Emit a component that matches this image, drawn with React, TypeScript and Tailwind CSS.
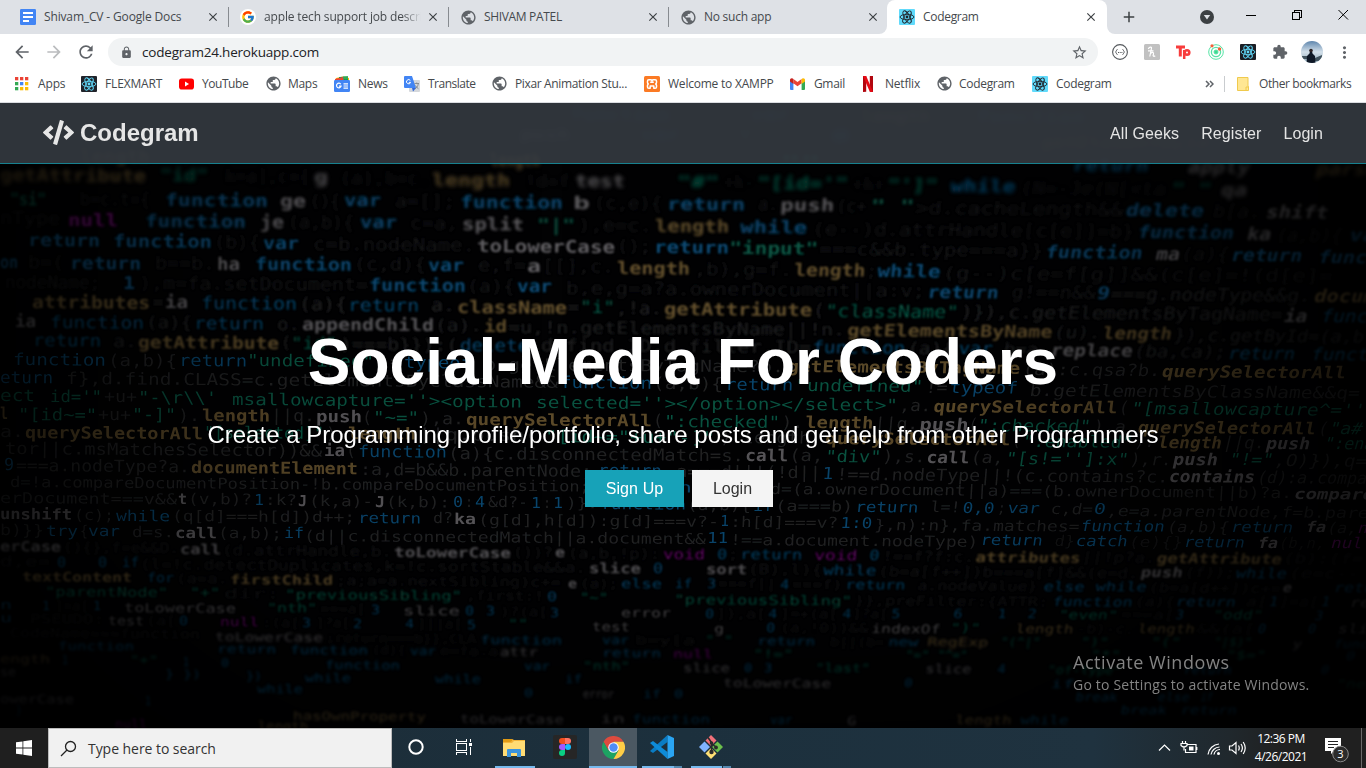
import type { ReactNode } from "react";
import {
  MdAdd,
  MdArrowBack,
  MdArrowForward,
  MdClose,
  MdExtension,
  MdLock,
  MdMoreVert,
  MdPublic,
  MdRefresh,
  MdStarOutline,
} from "react-icons/md";
import { FcGoogle } from "react-icons/fc";
import { FaCode } from "react-icons/fa";

/* ---------- favicons and small drawings ---------- */

function Atom({ bg, fg, size = 16 }: { bg: string; fg: string; size?: number }) {
  return (
    <svg width={size} height={size} viewBox="0 0 16 16" className="shrink-0">
      <rect width="16" height="16" rx="1" fill={bg} />
      <g fill="none" stroke={fg} strokeWidth="0.9">
        <ellipse cx="8" cy="8" rx="6.9" ry="2.7" />
        <ellipse cx="8" cy="8" rx="6.9" ry="2.7" transform="rotate(60 8 8)" />
        <ellipse cx="8" cy="8" rx="6.9" ry="2.7" transform="rotate(120 8 8)" />
      </g>
      <circle cx="8" cy="8" r="1.4" fill={fg} />
    </svg>
  );
}

const Globe = () => <MdPublic className="size-[17px] shrink-0 text-[#5f6368]" />;

const DocsIcon = () => (
  <svg width="16" height="16" viewBox="0 0 16 16" className="shrink-0">
    <rect width="16" height="16" rx="1.2" fill="#4285f4" />
    <path d="M3 4h10M3 8h10M3 12h6" stroke="#fff" strokeWidth="1.8" />
  </svg>
);

const GoogleIcon = () => (
  <span className="flex size-4 shrink-0 items-center justify-center rounded-full bg-white">
    <FcGoogle className="size-[14px]" />
  </span>
);

const AppsIcon = () => {
  const colors = ["#ea4335", "#ea4335", "#ea4335", "#34a853", "#4285f4", "#fbbc05", "#34a853", "#fbbc05", "#fbbc05"];
  return (
    <svg width="14" height="14" viewBox="0 0 14 14" className="shrink-0">
      {colors.map((c, i) => (
        <rect key={i} x={(i % 3) * 5} y={Math.floor(i / 3) * 5} width="3.3" height="3.3" fill={c} />
      ))}
    </svg>
  );
};

const YouTubeIcon = () => (
  <svg width="15" height="12" viewBox="0 0 15 12" className="shrink-0">
    <rect y="0.5" width="15" height="11" rx="2.8" fill="#f00" />
    <path d="M6 3.6v4.8L10 6z" fill="#fff" />
  </svg>
);

const NewsIcon = () => (
  <svg width="16" height="16" viewBox="0 0 16 16" className="shrink-0">
    <path d="M2 2l7-1.5L15 2v5H1z" fill="#fbbc04" />
    <path d="M5 1l9-.6V5H5z" fill="#0f9d58" />
    <path d="M1 3l8-2 1 4H1z" fill="#ea4335" />
    <path d="M9 .5l5-.2V3L9 3z" fill="#34a853" />
    <rect y="4" width="16" height="12" rx="1.2" fill="#4285f4" />
    <path d="M6.8 8.3A2.3 2.3 0 1 0 7 10.2H5M9.5 7.8H14M9.5 10H14M9.5 12.2H14" fill="none" stroke="#fff" strokeWidth="1.2" />
  </svg>
);

const TranslateIcon = () => (
  <svg width="16" height="16" viewBox="0 0 16 16" className="shrink-0">
    <rect x="5" y="4" width="11" height="12" rx="1" fill="#d5d8dc" />
    <path d="M0 1a1 1 0 0 1 1-1h7l4 12H1a1 1 0 0 1-1-1z" fill="#4285f4" />
    <path d="M8 12h4l-3 3.5z" fill="#3367d6" />
    <path d="M6.4 4.6A2.1 2.1 0 1 0 6.6 6.4H4.8" fill="none" stroke="#fff" strokeWidth="1" />
    <path d="M10.5 7.5H15M12.7 6.5v1M11 13c2-1.500 3-3 3.300-5.500M11.500 9.500c.8 1.500 1.700 2.500 3 3.300" fill="none" stroke="#7a8086" strokeWidth=".8" />
  </svg>
);

const XamppIcon = () => (
  <svg width="16" height="16" viewBox="0 0 16 16" className="shrink-0">
    <rect width="16" height="16" rx="1.500" fill="#fb7a24" />
    <path
      d="M4.800 3.800h1.700q1 0 1.500 1 .5-1 1.500-1h1.700q1.300 0 1.300 1.300v1.400q0 1-.8 1.500.8.500.8 1.500v1.400q0 1.300-1.300 1.300H9.800V10H6.200v2.200H4.800q-1.300 0-1.300-1.300V9.500q0-1 .8-1.500-.8-.5-.8-1.500V5.100q0-1.300 1.300-1.300zM6.200 6.300h3.600"
      fill="none"
      stroke="#fff"
      strokeWidth="1.500"
      strokeLinejoin="round"
    />
  </svg>
);

const GmailIcon = () => (
  <svg width="15" height="12" viewBox="0 0 15 12" className="shrink-0">
    <path d="M0 2v9a1 1 0 0 0 1 1h2.400V4.600z" fill="#4285f4" />
    <path d="M15 2v9a1 1 0 0 1-1 1h-2.400V4.600z" fill="#34a853" />
    <path d="M3.400 1v4.200l4.100 3.100 4.100-3.100V1L7.500 4.100z" fill="#ea4335" />
    <path d="M0 2v1.600l3.400 2.500V1.100L2.600.5C1.500-.3 0 .5 0 2z" fill="#c5221f" />
    <path d="M15 2v1.600l-3.400 2.500V1.100l.8-.6C13.500-.3 15 .5 15 2z" fill="#fbbc04" />
  </svg>
);

const NetflixIcon = () => (
  <svg width="10" height="16" viewBox="0 0 10 16" className="shrink-0">
    <path d="M0 0h3.200v15.700L0 16zM6.800 0H10v16l-3.200-.3z" fill="#b1060f" />
    <path d="M0 0h3.200L10 16l-3.200-.3z" fill="#e50914" />
  </svg>
);

const FolderIcon = () => (
  <svg width="12" height="14" viewBox="0 0 12 14" className="shrink-0">
    <path d="M.5.500h10.500v9h.5v4H.5z" fill="#ffe793" stroke="#f0ca4d" />
    <path d="M9 13.500V10h2.500" fill="none" stroke="#f0ca4d" />
  </svg>
);

/* ---------- browser chrome ---------- */

function Tab({ icon, title, tracking, fade }: { icon: ReactNode; title: string; tracking: string; fade?: boolean }) {
  return (
    <div className="flex h-full w-[220px] shrink-0 items-center">
      <div className="flex w-6 shrink-0 items-center">{icon}</div>
      <div className={`w-[157px] shrink-0 overflow-hidden whitespace-nowrap text-[12px] text-[#45494d] ${tracking} ${fade ? "[mask-image:linear-gradient(to_right,black_88%,transparent)]" : ""}`}>
        {title}
      </div>
      <MdClose className="ml-[5px] size-[14px] shrink-0 text-[#3c4043]" />
      <div className="ml-2 h-5 w-px shrink-0 bg-[#878b90]" />
    </div>
  );
}

function TabStrip() {
  return (
    <div className="flex h-[34px] shrink-0 bg-white">
      <div className="flex w-[887px] shrink-0 overflow-hidden rounded-br-lg bg-[#dee1e6] pl-5">
        <Tab icon={<DocsIcon />} title="Shivam_CV - Google Docs" tracking="tracking-[-0.15px]" />
        <Tab icon={<GoogleIcon />} title="apple tech support job descrip" tracking="tracking-[-0.15px]" fade />
        <Tab icon={<Globe />} title="SHIVAM PATEL" tracking="tracking-[-0.33px]" />
        <Tab icon={<Globe />} title="No such app" tracking="tracking-[-0.25px]" />
      </div>
      <div className="flex bg-[#dee1e6]">
        <div className="flex w-[220px] items-center rounded-t-lg bg-white pl-3">
          <Atom bg="#61dafb" fg="#20232a" />
          <div className="ml-2 w-[157px] text-[12px] tracking-[-0.3px] text-[#45494d]">Codegram</div>
          <MdClose className="ml-[4px] size-[14px] text-[#3c4043]" />
        </div>
      </div>
      <div className="flex flex-1 items-center rounded-bl-lg bg-[#dee1e6] text-[#3c4043]">
        <MdAdd className="ml-[13px] size-[18px]" />
        <svg width="14" height="14" viewBox="0 0 14 14" className="ml-[62px]">
          <circle cx="7" cy="7" r="7" fill="#3c4043" />
          <path d="M3.800 5h6.400L7 9.500z" fill="#dee1e6" />
        </svg>
        <svg width="104" height="12" viewBox="0 0 104 12" className="mb-[5px] ml-[32px]" fill="none" stroke="#000" shapeRendering="crispEdges">
          <path d="M0 6.500h10" />
          <path d="M46.500 3.500h7v7h-7zM48.500 3.500v-2h7v7h-2" />
          <path d="M92.500 1l9.500 9.500M102 1l-9.500 9.500" shapeRendering="auto" />
        </svg>
      </div>
    </div>
  );
}

function Toolbar() {
  return (
    <div className="flex h-9 shrink-0 items-center bg-white pl-3 text-[#5f6368]">
      <MdArrowBack className="size-5" />
      <MdArrowForward className="ml-3 size-5 text-[#babcbe]" />
      <MdRefresh className="ml-3 size-5" />
      <div className="ml-3 flex h-7 w-[990px] items-center rounded-full bg-[#f1f3f4] pl-3">
        <MdLock className="size-[13px]" />
        <span className="ml-[9px] flex-1 text-[13.500px] tracking-[-0.2px] text-[#202124]">codegram24.herokuapp.com</span>
        <MdStarOutline className="mr-[10px] size-[17px]" />
      </div>
      <div className="ml-[14px] flex items-center gap-4">
        <svg width="16" height="16" viewBox="0 0 16 16" fill="none" stroke="#55595d">
          <circle cx="8" cy="8" r="7.400" strokeWidth="1.100" />
          <path d="M5.500 5.500c-1.500 0-.6 2-2 2.500 1.400.5.5 2.500 2 2.500M10.500 5.500c1.500 0 .6 2 2 2.500-1.400.5-.5 2.500-2 2.500" strokeWidth="1" />
          <path d="M6 8.500h4.500" strokeWidth="1" strokeDasharray="1 .7" />
        </svg>
        <svg width="16" height="16" viewBox="0 0 16 16">
          <rect width="16" height="16" rx="1.500" fill="#c1c1c1" />
          <path d="M4.300 5c.8-2 3.400-2.600 3.200-.8L5.800 12.500M4 6.800h5.500M6.500 9.800c1.200-2 3.300-2 3 .2l-.4 1.700q.8 1.200 2.100 0" fill="none" stroke="#fff" strokeWidth="1.200" />
        </svg>
        <svg width="16" height="16" viewBox="0 0 16 16" fill="none" stroke="#f73c3c" strokeWidth="3">
          <path d="M0 3h9M4.300 3v9.500" />
          <circle cx="11" cy="8.500" r="2.300" strokeWidth="2.600" />
          <path d="M8.200 6v9" strokeWidth="2.500" />
        </svg>
        <svg width="16" height="16" viewBox="0 0 16 16" fill="none" stroke="#57e4a6">
          <circle cx="8" cy="8" r="7.300" />
          <circle cx="8" cy="8" r="4.600" strokeWidth="1.300" />
          <circle cx="8" cy="8" r="2" fill="#40d890" />
          <circle cx="4" cy="1.800" r="1.600" fill="#f4603a" stroke="none" />
          <circle cx="11.500" cy="5" r="1.700" fill="#f4603a" stroke="none" />
        </svg>
        <Atom bg="#1b1e24" fg="#61dafb" />
        <MdExtension className="size-4" />
      </div>
      <svg width="22" height="22" viewBox="0 0 22 22" className="ml-[13px]">
        <defs>
          <clipPath id="avatar"><circle cx="11" cy="11" r="11" /></clipPath>
          <linearGradient id="sky" x2="0" y2="1"><stop stopColor="#5f86ad" /><stop offset=".5" stopColor="#d3e0ea" /><stop offset="1" stopColor="#8fa7b7" /></linearGradient>
        </defs>
        <g clipPath="url(#avatar)">
          <rect width="22" height="22" fill="url(#sky)" />
          <path d="M0 15h6v3H2zM14 17l7-3v6h-7z" fill="#42545f" />
          <path d="M5.500 22l.5-7 2.500-2.500L9 10h2l.5 2.500L14 15l.5 7z" fill="#0e1826" />
          <circle cx="10" cy="9.500" r="1.800" fill="#2b2224" />
        </g>
      </svg>
      <MdMoreVert className="ml-[12px] size-[19px]" />
    </div>
  );
}

/* slot: distance from this icon to the next one */
const bookmarks: { icon: ReactNode; label: string; slot: string; gap: string }[] = [
  { icon: <AppsIcon />, label: "Apps", slot: "w-[66px]", gap: "w-[23px]" },
  { icon: <Atom bg="#20232a" fg="#61dafb" />, label: "FLEXMART", slot: "w-[98px]", gap: "w-6" },
  { icon: <YouTubeIcon />, label: "YouTube", slot: "w-[86px] tracking-[-0.45px]", gap: "w-[23px]" },
  { icon: <Globe />, label: "Maps", slot: "w-[69px] tracking-[-0.3px]", gap: "w-[23px]" },
  { icon: <NewsIcon />, label: "News", slot: "w-[70px] tracking-[-0.3px]", gap: "w-6" },
  { icon: <TranslateIcon />, label: "Translate", slot: "w-[87px] tracking-[-0.5px]", gap: "w-6" },
  { icon: <Globe />, label: "Pixar Animation Stu...", slot: "w-[153px] tracking-[-0.35px]", gap: "w-6" },
  { icon: <XamppIcon />, label: "Welcome to XAMPP", slot: "w-[146px] tracking-[-0.22px]", gap: "w-6" },
  { icon: <GmailIcon />, label: "Gmail", slot: "w-[73px] tracking-[-0.35px]", gap: "w-6" },
  { icon: <NetflixIcon />, label: "Netflix", slot: "w-[73px] tracking-[-0.2px]", gap: "w-[22px]" },
  { icon: <Globe />, label: "Codegram", slot: "w-[96px] tracking-[-0.3px]", gap: "w-[23px]" },
  { icon: <Atom bg="#61dafb" fg="#20232a" />, label: "Codegram", slot: "w-[100px] tracking-[-0.3px]", gap: "w-6" },
];

function Bookmarks() {
  return (
    <div className="flex h-[33px] shrink-0 items-center border-b border-[#dadce0] bg-white pb-[5px] pl-[15px] text-[12px] tracking-[-0.15px] text-[#45494d]">
      {bookmarks.map((b, i) => (
        <div key={i} className={`flex shrink-0 items-center whitespace-nowrap ${b.slot}`}>
          <span className={`flex shrink-0 items-center ${b.gap}`}>{b.icon}</span>
          {b.label}
        </div>
      ))}
      <svg width="9" height="8" viewBox="0 0 9 8" className="ml-[73px] shrink-0" fill="none" stroke="#5f6368" strokeWidth="1.500">
        <path d="M1 1l3 3-3 3M5 1l3 3-3 3" />
      </svg>
      <div className="ml-[10px] h-4 w-px shrink-0 bg-[#c9cccf]" />
      <div className="ml-[12px] flex w-[22px] shrink-0"><FolderIcon /></div>
      <span className="whitespace-nowrap tracking-[-0.42px]">Other bookmarks</span>
    </div>
  );
}

/* ---------- hero backdrop: out-of-focus source listing ---------- */

type Hue = "b" | "y" | "g" | "w" | "m" | "d";
type Token = [x: number, y: number, width: number, text: string, hue: Hue];

const hues: Record<Hue, string> = {
  b: "#0a4d78",
  y: "#66522f",
  g: "#0a5c48",
  w: "#626064",
  m: "#740c78",
  d: "#252628",
};

const listing: Token[] = [
  [380, 120, 120, "nodeType", "d"], [570, 120, 100, "function", "b"], [750, 120, 40, "var", "b"], [860, 122, 70, "length", "y"], [975, 122, 110, "function", "b"],
  [0, 118, 40, "ength", "y"], [60, 152, 80, "return", "d"], [520, 140, 50, "push", "w"], [640, 140, 40, "var", "b"], [735, 140, 20, "\"s\"", "g"], [830, 142, 20, "0", "b"],
  [1040, 148, 180, "getElementById(", "y"], [300, 140, 130, "className", "d"],
  [80, 162, 70, "length", "y"], [490, 166, 50, "length", "y"], [780, 168, 40, "\"\"", "g"],
  [1072, 171, 76, "return", "b"], [1187, 173, 62, "apply", "w"], [1315, 175, 62, "parse", "y"],
  [0, 181, 146, "getAttribute", "y"], [160, 181, 48, "\"id\"", "g"], [225, 182, 85, "k=a],c={", "d"], [314, 183, 14, "g", "w"], [340, 184, 90, "(a),b=c.", "d"],
  [432, 186, 78, "length", "y"], [525, 187, 45, "!d=f", "d"], [575, 187, 50, "test", "w"], [677, 188, 42, "\"#\"", "g"], [724, 188, 30, "+k-", "d"], [757, 189, 91, "\"[id='\"", "g"], [852, 190, 32, "+k+", "d"],
  [887, 191, 50, "\"']\"", "g"], [950, 192, 65, "while", "b"], [1020, 194, 145, "(N=-Je(N[<ta", "d"], [1170, 195, 40, "\" \"", "g"], [1220, 196, 26, "qa", "w"],
  [10, 205, 36, "\"si\"", "g"], [80, 205, 70, "b=c.t={", "d"], [165, 206, 103, "function", "b"], [280, 207, 26, "ge", "w"], [310, 207, 30, "(){", "d"], [344, 206, 37, "var", "b"], [395, 207, 60, "a=[];", "d"],
  [460, 208, 103, "function", "b"], [573, 209, 17, "b", "w"], [594, 209, 68, "(c,e){", "d"], [667, 210, 78, "return", "b"], [758, 210, 20, "a.", "d"], [780, 211, 54, "push", "w"], [836, 212, 30, "(c+", "d"], [870, 212, 44, "\" \"", "g"],
  [915, 214, 208, ">d.cacheLength&&", "d"], [1125, 216, 78, "delete", "b"], [1212, 217, 48, "b[a.", "d"], [1265, 218, 62, "shift", "w"],
  [0, 224, 60, "nType", "d"], [68, 226, 50, "null", "m"], [145, 227, 101, "function", "b"], [260, 228, 24, "je", "w"], [288, 228, 66, "(a,b){", "d"], [360, 228, 37, "var", "b"], [410, 229, 48, "c=a,", "d"],
  [462, 230, 62, "split", "w"], [537, 231, 38, "\"|\"", "g"], [578, 231, 74, "),e=c.", "d"], [655, 232, 74, "length", "y"], [740, 233, 67, "while", "b"], [812, 235, 322, "(e--)d.attrHandle[c[e]]=b}", "d"],
  [1137, 238, 96, "function", "b"], [1246, 240, 24, "ka", "w"], [1275, 241, 66, "(a,b){", "d"], [1348, 241, 40, "var", "b"],
  [28, 246, 72, "return", "b"], [113, 247, 99, "function", "b"], [214, 248, 46, "(b){", "d"], [263, 249, 36, "var", "b"], [313, 250, 162, "c=b.nodeName.", "d"], [477, 252, 138, "toLowerCase", "w"], [617, 252, 34, "();", "d"],
  [654, 253, 75, "return", "b"], [729, 254, 89, "\"input\"", "g"], [819, 255, 224, "===c&&b.type===a}}", "d"], [1045, 258, 97, "function", "b"], [1155, 260, 24, "ma", "w"], [1180, 260, 48, "(a){", "d"], [1230, 261, 71, "return", "b"], [1317, 263, 98, "function", "b"],
  [0, 268, 18, "on", "b"], [28, 268, 36, "b=(", "d"], [70, 269, 71, "return", "b"], [155, 269, 60, "b==b.", "d"], [217, 270, 23, "ha", "w"], [255, 270, 97, "function", "b"], [354, 270, 72, "(c,d){", "d"], [428, 271, 36, "var", "b"],
  [478, 271, 48, "e,f=", "d"], [527, 272, 14, "a", "w"], [542, 272, 72, "[[],c.", "d"], [617, 274, 73, "length", "y"], [694, 275, 98, ",b),g=f.", "d"], [794, 276, 71, "length", "y"], [866, 277, 10, ";", "d"], [877, 277, 63, "while", "b"], [942, 279, 390, "(g--)c[e=f[g]]&&(c[e]=!(d[e]=", "d"],
  [5, 288, 95, "nodeName;", "d"], [123, 289, 12, "1", "b"], [139, 289, 229, "),m=fa.setDocument=", "d"], [369, 291, 97, "function", "b"], [467, 292, 48, "(a){", "d"], [517, 292, 35, "var", "b"], [566, 294, 359, "b,e,g=a?a.ownerDocument||a:v;", "d"],
  [927, 298, 71, "return", "b"], [1011, 298, 84, "g!==n&&", "d"], [1096, 299, 13, "9", "b"], [1110, 300, 200, "===g.nodeType&&g.", "d"], [1313, 302, 98, "document", "y"],
  [32, 308, 118, "attributes", "y"], [153, 308, 10, "=", "d"], [165, 308, 23, "ia", "w"], [201, 309, 96, "function", "b"], [299, 310, 48, "(a){", "d"], [348, 311, 71, "return", "b"], [431, 311, 24, "a.", "d"], [457, 313, 110, "className", "y"], [568, 313, 11, "=", "d"],
  [580, 313, 35, "\"i\"", "g"], [616, 314, 46, ",!a.", "d"], [664, 315, 148, "getAttribute", "y"], [813, 316, 11, "(", "d"], [825, 317, 133, "\"className\"", "g"], [960, 318, 322, ")}),c.getElementsByTagName=", "d"], [1283, 322, 23, "ia", "w"], [1320, 322, 94, "function", "b"],
  [15, 327, 21, "ia", "w"], [50, 328, 94, "function", "b"], [146, 328, 46, "(a){", "d"], [194, 329, 70, "return", "b"], [277, 330, 23, "o.", "d"], [302, 330, 132, "appendChild", "w"], [435, 331, 47, "(a).", "d"], [484, 332, 23, "id", "y"], [508, 333, 337, "=u,!n.getElementsByName||!n.", "d"],
  [847, 336, 205, "getElementsByName", "y"], [1053, 338, 47, "(u).", "d"], [1102, 339, 69, "length", "y"], [1173, 341, 190, "}),c.getById=(a,b", "d"],
  [33, 346, 68, "return", "b"], [113, 347, 24, "a.", "d"], [138, 348, 141, "getAttribute", "y"], [281, 348, 10, "(", "d"], [291, 349, 46, "\"id\"", "g"], [340, 350, 118, ")===b}}):(", "d"], [460, 351, 69, "delete", "b"], [541, 351, 270, "d.find.ID,d.filter.ID=", "d"], [812, 353, 93, "function", "b"],
  [907, 354, 46, "(a){", "d"], [958, 354, 34, "var", "b"], [1003, 355, 46, "b=a.", "d"], [1050, 356, 82, "replace", "w"], [1133, 357, 92, "(ba,ca);", "d"], [1227, 359, 67, "return", "b"], [1310, 360, 92, "function", "b"],
  [13, 365, 93, "function", "b"], [108, 366, 69, "(a,b){", "d"], [179, 366, 68, "return", "b"], [247, 366, 127, "\"undefined\"", "g"], [378, 367, 24, "!=", "d"], [404, 368, 68, "typeof", "b"], [484, 370, 300, "b.getElementsByTagName?b.", "d"],
  [787, 372, 233, "getElementsByTagName", "y"], [1022, 375, 138, "(a):c.qsa?b.", "d"], [1161, 377, 184, "querySelectorAll", "y"],
  [0, 383, 53, "eturn", "b"], [66, 384, 492, "f},d.find.CLASS=c.getElementsByClassName&&", "d"], [560, 388, 92, "function", "b"], [653, 389, 70, "(a,b){", "d"], [725, 390, 68, "return", "b"], [795, 391, 128, "\"undefined\"", "g"], [925, 393, 22, "!=", "d"], [949, 393, 68, "typeof", "b"], [1029, 396, 330, "b.getElementsByClassName&&q=", "d"],
  [0, 401, 35, "ect", "g"], [50, 402, 52, "id='\"", "g"], [104, 402, 33, "+u+", "d"], [138, 403, 79, "\"-\\r\\\\'", "g"], [232, 405, 220, "msallowcapture=''><", "g"], [452, 407, 70, "option", "g"], [536, 408, 362, "selected=''></option></select>\"", "g"],
  [899, 411, 32, ",a.", "d"], [933, 412, 184, "querySelectorAll", "y"], [1118, 413, 10, "(", "d"], [1130, 414, 258, "\"[msallowcapture^='']\"", "g"],
  [0, 419, 8, "l", "y"], [18, 420, 79, "\"[id~=\"", "g"], [98, 420, 33, "+u+", "d"], [132, 420, 44, "\"-]\"", "g"], [178, 421, 22, ").", "d"], [202, 421, 68, "length", "y"], [271, 421, 44, "||q.", "d"], [316, 422, 46, "push", "w"], [362, 423, 10, "(", "d"], [373, 423, 46, "\"~=\"", "g"], [420, 424, 44, "),a.", "d"],
  [466, 425, 186, "querySelectorAll", "y"], [653, 426, 10, "(", "d"], [664, 427, 116, "\":checked\"", "g"], [781, 428, 22, ").", "d"], [805, 428, 68, "length", "y"], [874, 429, 44, "||q.", "d"], [919, 430, 49, "push", "w"], [968, 430, 9, "(", "d"], [977, 431, 113, "\":checked\"", "g"], [1092, 432, 44, "),a.", "d"], [1137, 433, 178, "querySelectorAll", "y"], [1317, 434, 10, "(", "d"], [1328, 434, 44, "\"a#\"", "g"],
  [0, 437, 24, "a.", "d"], [25, 438, 178, "querySelectorAll", "y"], [204, 438, 120, "\"[selected]\"", "g"], [326, 439, 20, ").", "d"], [348, 439, 68, "length", "y"], [418, 440, 120, "||q.push(", "d"], [545, 442, 170, "\"[id~=\"+u+\"-]\"", "g"], [720, 443, 90, ").length", "d"], [825, 444, 185, "querySelectorAll", "y"],
  [1011, 446, 10, "(", "d"], [1022, 447, 110, "\":enabled\"", "g"], [1134, 447, 20, ").", "d"], [1157, 448, 64, "length", "y"], [1222, 448, 42, "||q.", "d"], [1265, 449, 44, "push", "w"], [1323, 449, 100, "\":enabled\"", "g"],
  [5, 454, 317, "tor||c.msMatchesSelector))&&", "d"], [324, 456, 21, "ia", "w"], [346, 456, 10, "(", "d"], [358, 457, 89, "function", "b"], [448, 459, 296, "(a){c.disconnectedMatch=s.", "d"], [745, 461, 43, "call", "w"], [789, 461, 34, "(a,", "d"], [825, 462, 56, "\"div\"", "g"], [882, 462, 43, "),s.", "d"], [926, 463, 43, "call", "w"], [970, 463, 33, "(a,", "d"], [1005, 464, 123, "\"[s!='']:x\"", "g"], [1129, 465, 42, "),r.", "d"], [1172, 465, 45, "push", "w"], [1228, 465, 44, "\"!=\"", "g"], [1273, 466, 93, ",O)}),q=", "d"],
  [4, 470, 10, "9", "b"], [16, 471, 174, "===a.nodeType?a.", "d"], [191, 473, 167, "documentElement", "y"], [360, 475, 232, ":a,d=b&&b.parentNode;", "d"], [598, 476, 64, "return", "b"], [665, 477, 156, " a===d||!(!d||", "d"], [822, 479, 11, "1", "b"], [836, 480, 332, "!==d.nodeType||!(c.contains?c.", "d"], [1168, 482, 86, "contains", "w"], [1256, 483, 110, "(d):a.compa", "d"],
  [10, 487, 580, "d=!a.compareDocumentPosition-!b.compareDocumentPosition;", "d"], [610, 492, 150, "return d?d:", "b"], [770, 494, 522, "d=(a.ownerDocument||a)===(b.ownerDocument||b)?a.", "d"], [1293, 499, 80, "compare", "w"],
  [0, 503, 177, "erDocument===v&&", "d"], [178, 504, 9, "t", "w"], [188, 504, 64, "(v,b)?", "d"], [254, 505, 10, "1", "b"], [265, 505, 32, ":k?", "d"], [298, 506, 9, "J", "w"], [309, 506, 64, "(k,a)-", "d"], [375, 507, 10, "J", "w"], [386, 507, 64, "(k,b):", "d"], [453, 507, 10, "0", "b"], [465, 507, 8, ":", "d"], [475, 507, 10, "4", "b"], [488, 507, 40, "&d?-", "d"], [531, 508, 10, "1", "b"], [543, 508, 8, ":", "d"], [553, 508, 10, "1", "b"], [566, 508, 32, ")}:", "d"], [600, 509, 86, "function", "b"], [687, 510, 64, "(a,b){", "d"], [753, 511, 20, "if", "b"], [775, 511, 78, "(a===b)", "d"], [855, 512, 63, "return", "b"], [930, 512, 30, "l=!", "d"], [962, 513, 32, "0,0", "b"], [997, 513, 8, ";", "d"], [1007, 513, 32, "var", "b"], [1050, 514, 42, "c,d=", "d"], [1093, 514, 12, "0", "b"], [1106, 516, 262, ",e=a.parentNode,f=b.pare", "d"],
  [0, 519, 72, "unshift", "w"], [74, 520, 40, "(c);", "d"], [116, 521, 54, "while", "b"], [172, 521, 183, "(q[d]===h[d])d++;", "d"], [358, 523, 63, "return", "b"], [433, 523, 20, "d?", "d"], [454, 524, 22, "ka", "w"], [478, 525, 241, "(g[d],h[d]):g[d]===v?-", "d"], [720, 526, 9, "1", "b"], [730, 527, 108, ":h[d]===v?", "d"], [840, 528, 32, "1:0", "b"], [874, 530, 205, "},n):n},fa.matches=", "d"], [1080, 531, 84, "function", "b"], [1166, 532, 62, "(a,b){", "d"], [1230, 532, 62, "return", "b"], [1305, 532, 20, "fa", "w"], [1326, 533, 30, "(a,", "d"], [1357, 533, 40, "null", "m"],
  [0, 535, 44, "b)}}", "d"], [46, 536, 32, "try", "b"], [80, 536, 8, "{", "d"], [88, 536, 32, "var", "b"], [132, 537, 42, "d=s.", "d"], [175, 538, 42, "call", "w"], [218, 538, 64, "(a,b);", "d"], [284, 538, 20, "if", "b"], [304, 541, 402, "(d||c.disconnectedMatch||a.document&&", "d"], [707, 543, 21, "11", "b"], [730, 545, 248, "!==a.document.nodeType)", "d"], [980, 545, 62, "return", "b"], [1054, 546, 20, "d}", "d"], [1075, 546, 52, "catch", "b"], [1128, 547, 54, "(e){}", "d"], [1183, 547, 61, "return", "b"], [1257, 548, 20, "fa", "w"], [1278, 548, 46, "(b,n,", "d"], [1330, 548, 42, "null", "m"],
  [0, 551, 61, "erCase", "w"], [63, 552, 116, "(){},f=e&&D.", "d"], [180, 554, 41, "call", "w"], [222, 555, 170, "(d.attrHandle,b.", "d"], [394, 557, 117, "toLowerCase", "w"], [513, 557, 40, "())?", "d"], [555, 557, 10, "e", "w"], [568, 558, 92, "(a,b,!p):", "d"], [663, 559, 42, "void", "m"], [717, 559, 10, "0", "b"], [728, 559, 10, ";", "d"], [740, 559, 62, "return", "b"], [814, 560, 43, "void", "m"], [869, 560, 10, "0", "b"], [882, 561, 92, "!==f?f:c.", "d"], [975, 562, 105, "attributes", "y"], [1081, 562, 74, "||!p?a.", "d"], [1156, 563, 125, "getAttribute", "y"], [1282, 563, 80, "(b):(f=", "d"],
  [0, 566, 50, "d,e=", "d"], [57, 567, 9, "0", "b"], [98, 567, 9, "0", "b"], [122, 567, 17, "if", "b"], [140, 569, 446, "(l=!c.detectDuplicates,k=!c.sortStable&&a.", "d"], [589, 573, 52, "slice", "w"], [653, 573, 10, "0", "b"], [706, 574, 41, "sort", "w"], [748, 574, 74, "(B),l){", "d"], [823, 575, 53, "while", "b"], [878, 576, 260, "(b=a[f++])b===a[f]&&(e=d.", "d"], [1140, 577, 42, "push", "w"], [1184, 577, 50, "(f));", "d"], [1235, 578, 51, "while", "b"], [1288, 578, 70, "(e=c--", "d"],
  [22, 581, 110, "textContent", "y"], [147, 582, 27, "for", "b"], [176, 583, 52, "(a=a.", "d"], [230, 584, 103, "firstChild", "y"], [336, 585, 225, ";a;a=a.nextSibling)c+=", "d"], [568, 588, 9, "e", "w"], [580, 588, 38, "(a);", "d"], [621, 588, 41, "else", "b"], [675, 588, 17, "if", "b"], [707, 588, 9, "3", "b"], [718, 588, 58, "===f||", "d"], [780, 589, 9, "4", "b"], [792, 589, 50, "===f)", "d"], [845, 589, 60, "return", "b"], [917, 590, 120, "a.nodeValue}", "d"], [1043, 591, 41, "else", "b"], [1095, 591, 51, "while", "b"], [1148, 592, 132, "(b=a[d++])c+=", "d"], [1282, 592, 9, "e", "w"], [1333, 592, 60, "return", "b"],
  [45, 596, 123, "\"parentNode\"", "g"], [190, 597, 30, "\"+\"", "g"], [224, 598, 56, "dir:", "d"], [285, 599, 177, "\"previousSibling\"", "g"], [466, 600, 78, ",first:!", "d"], [547, 601, 10, "0", "b"], [580, 602, 28, "\"~\"", "g"], [674, 604, 178, "\"previousSibling\"", "g"], [854, 605, 194, "}},preFilter:{ATTR:", "d"], [1052, 606, 80, "function", "b"], [1134, 606, 40, "(a){", "d"], [1175, 606, 60, "return", "b"], [1245, 606, 22, "a[", "d"], [1268, 606, 9, "1", "b"], [1278, 606, 40, "]=a[", "d"], [1320, 606, 9, "1", "b"], [1349, 607, 40, "repl", "w"],
  [0, 609, 12, "n", "b"], [42, 610, 8, "1", "b"], [93, 610, 8, "1", "b"], [55, 610, 34, "]=a[", "d"], [124, 612, 112, "toLowerCase", "w"], [267, 612, 50, "\"nth\"", "g"], [320, 613, 46, "===a[", "d"], [371, 614, 9, "3", "b"], [403, 615, 57, "slice", "w"], [465, 615, 9, "0", "b"], [486, 615, 9, "3", "b"], [500, 616, 48, ")?(a[", "d"], [550, 617, 9, "3", "b"], [621, 617, 50, "error", "w"], [705, 618, 9, "0", "b"], [716, 618, 50, "]),a[", "d"], [768, 618, 9, "4", "b"], [780, 618, 58, "]=+(a[", "d"], [842, 618, 9, "4", "b"], [852, 618, 36, "]?a[", "d"], [891, 618, 9, "5", "b"], [953, 618, 9, "6", "b"], [997, 618, 9, "1", "b"], [1027, 618, 9, "2", "b"], [1058, 619, 59, "\"even\"", "g"], [1120, 619, 54, "===a[", "d"], [1175, 619, 8, "3", "b"], [1212, 619, 50, "\"odd\"", "g"], [1314, 620, 8, "3", "b"],
  [0, 622, 12, "u", "b"], [30, 623, 74, "PSEUDO:", "d"], [108, 625, 36, "test", "w"], [146, 625, 30, "(a[", "d"], [179, 625, 9, "0", "b"], [220, 626, 39, "null", "m"], [262, 627, 38, ":(a[", "d"], [302, 627, 9, "3", "b"], [316, 627, 34, "]?a[", "d"], [353, 628, 9, "2", "b"], [405, 628, 9, "4", "b"], [417, 628, 46, "]||a[", "d"], [467, 629, 9, "5", "b"], [508, 628, 20, "\"\"", "g"], [592, 631, 38, "test", "w"], [714, 633, 10, "g", "w"], [766, 632, 9, "0", "b"], [780, 632, 88, "(a,!0))&&", "d"], [871, 633, 69, "indexOf", "w"], [950, 632, 30, "\")\"", "g"], [1015, 633, 58, "length", "y"], [1076, 633, 58, "-b)-c.", "d"], [1137, 633, 57, "length", "y"], [1196, 633, 58, "&&(a[", "d"], [1257, 633, 8, "0", "b"], [1307, 633, 8, "0", "b"], [1337, 633, 50, "slice", "w"],
  [10, 637, 190, "CodeName===function", "d"], [215, 641, 108, "toLowerCase", "w"], [326, 642, 150, ";return===b}},CLA", "d"], [480, 644, 82, "function", "b"], [602, 644, 27, "var", "b"], [635, 644, 60, "b=y[a", "d"], [705, 644, 28, "\" \"", "g"], [757, 645, 58, "return", "b"], [830, 646, 54, "b||(b=", "d"], [888, 646, 30, "new", "b"], [927, 646, 61, "RegExp", "y"], [1000, 646, 40, "\"(^|\"", "g"], [1080, 646, 28, "\")\"", "g"], [1150, 646, 30, "\"(\"", "g"], [1213, 646, 38, "\"|$)\"", "g"], [1292, 648, 9, "y", "w"], [1333, 648, 70, "function", "b"],
  [58, 650, 76, "function", "b"], [217, 653, 59, "return", "b"], [290, 654, 78, "function", "b"], [372, 654, 34, "(d){", "d"], [410, 655, 26, "var", "b"], [440, 655, 58, "e=fa.a", "d"], [500, 656, 38, "attr", "w"], [602, 657, 59, "return", "b"], [673, 658, 40, "null", "m"], [753, 658, 40, "\"!=\"", "g"], [905, 659, 24, "\"=\"", "g"], [937, 659, 30, "\"^=\"", "g"], [1090, 659, 30, "\"*\"", "g"], [1225, 659, 40, "\"$=\"", "g"], [1345, 660, 9, "0", "b"],
  [0, 663, 50, "ength", "y"], [62, 664, 6, "1", "b"], [130, 664, 28, "\"+\"", "g"], [183, 666, 6, "1", "b"], [221, 667, 8, "0", "b"], [325, 669, 75, "function", "b"], [524, 670, 26, "var", "b"], [583, 670, 47, "\"nth\"", "g"], [683, 672, 47, "slice", "w"], [744, 672, 8, "0", "b"], [764, 672, 8, "3", "b"], [815, 672, 55, "\"last\"", "g"], [925, 673, 46, "slice", "w"], [997, 673, 8, "4", "b"], [1047, 674, 74, "\"of-type\"", "g"], [1183, 674, 48, "return", "b"], [1320, 674, 8, "0", "b"],
  [0, 676, 16, "se", "w"], [165, 678, 36, "} })", "b"], [246, 680, 16, "})", "b"], [305, 682, 46, "while", "b"], [435, 683, 46, "while", "b"], [565, 683, 17, "if", "b"], [723, 687, 108, "toLowerCase", "w"], [904, 687, 8, "0", "b"], [1050, 688, 24, "if", "b"], [1335, 688, 40, "\"nex", "g"],
  [257, 693, 46, "while", "b"], [524, 697, 9, "0", "b"], [583, 698, 31, "error", "w"], [643, 698, 18, "if", "b"], [674, 698, 9, "0", "b"], [1075, 701, 42, "break", "b"], [1157, 701, 32, "else", "b"], [1200, 701, 12, "if", "b"],
  [0, 703, 74, "owerCase", "w"], [145, 705, 6, "1", "b"], [1120, 714, 46, "break", "b"], [1180, 714, 56, "return", "b"], [16, 714, 6, "}", "b"],
  [293, 720, 133, "hasOwnProperty", "y"], [460, 723, 104, "toLowerCase", "w"], [600, 723, 25, "in", "w"], [632, 723, 78, "function", "b"], [770, 724, 22, "var", "b"], [847, 725, 9, "G", "w"], [955, 724, 56, "length", "y"], [1020, 724, 48, "while", "b"],
  [115, 728, 32, "null", "m"], [258, 730, 50, "length", "y"],
];

const bands = [
  { to: 160, blur: 3.5, size: 17.5, glow: 0.5 },
  { to: 198, blur: 1.9, size: 17.5, glow: 0.85 },
  { to: 242, blur: 1.6, size: 17.5, glow: 0.95 },
  { to: 282, blur: 1.3, size: 17.5, glow: 1 },
  { to: 323, blur: 1, size: 17.5, glow: 1 },
  { to: 362, blur: 0.8, size: 17, glow: 0.95 },
  { to: 485, blur: 0.6, size: 16.5, glow: 0.9 },
  { to: 549, blur: 0.65, size: 15, glow: 0.9 },
  { to: 580, blur: 0.85, size: 14, glow: 0.9 },
  { to: 608, blur: 1, size: 13, glow: 0.9 },
  { to: 640, blur: 1.2, size: 12.5, glow: 0.85 },
  { to: 800, blur: 1.5, size: 12, glow: 0.85 },
];

function CodeBackdrop() {
  return (
    <svg width="1366" height="625" viewBox="0 103 1366 625" className="absolute inset-0 select-none bg-[#020203]" aria-hidden="true">
      <defs>
        {bands.map((b, i) => (
          <filter key={i} id={`soft${i}`} x="-2%" y="-20%" width="104%" height="140%">
            <feGaussianBlur stdDeviation={b.blur} />
          </filter>
        ))}
        <linearGradient id="edges">
          <stop stopColor="#000" stopOpacity=".7" />
          <stop offset=".22" stopColor="#000" stopOpacity=".1" />
          <stop offset=".4" stopColor="#000" stopOpacity="0" />
          <stop offset=".7" stopColor="#000" stopOpacity=".05" />
          <stop offset="1" stopColor="#000" stopOpacity=".75" />
        </linearGradient>
        <linearGradient id="floor" x2="0" y2="1">
          <stop offset=".7" stopColor="#000" stopOpacity="0" />
          <stop offset="1" stopColor="#000" stopOpacity=".5" />
        </linearGradient>
      </defs>
      {bands.map((band, i) => {
        const from = i ? bands[i - 1].to : 0;
        return (
          <g key={i} filter={`url(#soft${i})`} opacity={band.glow} fontFamily="'DejaVu Sans Mono', monospace" fontSize={band.size}>
            {listing
              .filter(([, y]) => y >= from && y < band.to)
              .map(([x, y, w, text, hue], n) => (
                <text
                  key={n}
                  xmlSpace="preserve"
                  transform={`translate(${x} ${y}) rotate(0.45) skewX(${-Math.max(0, (x - 650) / 45)})`}
                  textLength={w}
                  lengthAdjust="spacingAndGlyphs"
                  fill={hues[hue]}
                  opacity={hue === "d" && (y < 300 || y > 545) ? 0.6 : 1}
                  fontWeight={((hue === "w" || hue === "y") && y < 600) || (y < 300 && hue !== "d") ? 700 : 400}
                >
                  {text}
                </text>
              ))}
          </g>
        );
      })}
      <rect y="103" width="1366" height="625" fill="url(#edges)" />
      <rect y="103" width="1366" height="625" fill="url(#floor)" />
    </svg>
  );
}

function Page() {
  return (
    <main className="relative flex h-[625px] shrink-0 flex-col overflow-hidden font-['Liberation_Sans',Arial,sans-serif]">
      <CodeBackdrop />
      <nav className="relative flex h-[61px] shrink-0 items-center border-b border-[#17818f] bg-[#343a40]/90 pl-[43px] pr-[43px] text-white">
        <a className="flex items-center text-[24px] font-bold text-[#e6e6e6]">
          <FaCode className="mb-[2px] mr-[6px] h-[25px] w-[31px]" />
          Codegram
        </a>
        <div className="ml-auto flex gap-[22px] pt-[2px] text-[16px] tracking-[0.08px] text-[#e4e4e4]">
          <a>All Geeks</a>
          <a>Register</a>
          <a>Login</a>
        </div>
      </nav>
      <section className="relative flex flex-col items-center pt-[160px] text-white">
        <h1 className="text-[64px] font-bold leading-[77px]">Social-Media For Coders</h1>
        <p className="mt-[16px] text-[24px] leading-[36px]">
          Create a Programming profile/portfolio, share posts and get help from other Programmers
        </p>
        <div className="mr-2 mt-[17px] flex gap-2 text-[16px]">
          <button className="h-[37px] w-[99px] bg-[#17a2b8] tracking-[0.1px]">Sign Up</button>
          <button className="h-[37px] w-[81px] bg-[#f4f4f4] text-[#333]">Login</button>
        </div>
      </section>
      <div className="absolute left-[1073px] top-[545px] whitespace-nowrap font-['Open_Sans','Noto_Sans',sans-serif] text-[#838383]">
        <div className="text-[18px] leading-[28px] tracking-[0.55px]">Activate Windows</div>
        <div className="text-[14px] leading-[18px] tracking-[0.2px]">Go to Settings to activate Windows.</div>
      </div>
    </main>
  );
}

/* ---------- Windows taskbar ---------- */

function TaskButton({ children, className = "w-[49px]", bar }: { children?: ReactNode; className?: string; bar?: ReactNode }) {
  return (
    <div className={`flex h-10 shrink-0 flex-col items-center ${className}`}>
      <div className="flex flex-1 items-center">{children}</div>
      <div className="flex h-[2px] w-full">{bar}</div>
    </div>
  );
}

function Taskbar() {
  return (
    <footer className="flex h-10 shrink-0 bg-[linear-gradient(to_right,#1d2c36_0,#1c303d_50%,#1f323f_80%,#20282d_90%,#202020_94%)] text-white">
      <div className="flex w-12 items-center justify-center bg-[#1f1f1f]">
        <svg width="16" height="16" viewBox="0 0 16 16" fill="#fff">
          <path d="M0 2.300l6.500-.9v6.200H0zM7.300 1.300L16 0v7.600H7.300zM0 8.400h6.500v6.200L0 13.700zM7.300 8.400H16V16l-8.700-1.300z" />
        </svg>
      </div>
      <div className="flex w-[344px] items-center border border-[#bcbcbc] bg-[#f1f1f1] pl-[11px]">
        <svg width="17" height="17" viewBox="0 0 17 17" fill="none" stroke="#222" strokeWidth="1.300">
          <circle cx="10.500" cy="6.500" r="5" />
          <path d="M7 10l-6 6" />
        </svg>
        <span className="ml-[11px] text-[14px] tracking-[-0.05px] text-[#333]">Type here to search</span>
      </div>
      <TaskButton className="w-12">
        <svg width="16" height="16" viewBox="0 0 16 16"><circle cx="8" cy="8" r="6.700" fill="none" stroke="#fff" strokeWidth="2" /></svg>
      </TaskButton>
      <TaskButton className="w-[48px]">
        <svg width="17" height="16" viewBox="0 0 17 16" fill="none" stroke="#fff" shapeRendering="crispEdges">
          <path d="M.5 0v2.500h10V0M.5 16v-2.500h10V16M.5 4.500h10v7H.5zM14.500 0v3M14.500 8v8" />
          <path d="M13 4h3v3h-3z" fill="#fff" stroke="none" />
        </svg>
      </TaskButton>
      <TaskButton className="w-[52px]" bar={<span className="ml-[7px] w-[40px] bg-[#76b9ed]" />}>
        <svg width="22" height="19" viewBox="0 0 22 19">
          <path d="M0 1h9l2 1h11v15H0z" fill="#f3b53a" />
          <path d="M0 5h9l2-2h11v15H0z" fill="#ffdc74" />
          <path d="M0 1h9v2L7 4H0z" fill="#e09a14" />
          <path d="M4 19v-7q0-1 1-1h12q1 0 1 1v7h-4v-4H8v4z" fill="#3b94dd" />
        </svg>
      </TaskButton>
      <TaskButton className="w-[49px]">
        <svg width="24" height="24" viewBox="0 0 24 24">
          <rect width="24" height="24" rx="2" fill="#262626" />
          <path d="M12 3H9a3 3 0 0 0 0 6h3z" fill="#f24e1e" />
          <path d="M12 3h3a3 3 0 0 1 0 6h-3z" fill="#ff7262" />
          <path d="M12 9H9a3 3 0 0 0 0 6h3z" fill="#a259ff" />
          <circle cx="15" cy="12" r="3" fill="#1abcfe" />
          <path d="M12 15H9a3 3 0 1 0 3 3z" fill="#0acf83" />
        </svg>
      </TaskButton>
      <TaskButton className="w-[48px] bg-[#4b5862]" bar={<span className="w-full bg-[#76b9ed]" />}>
        <svg width="23" height="23" viewBox="0 0 24 24">
          <path d="M12 6h10.400A12 12 0 0 0 1.600 6L6.800 15z" fill="#dd4b3e" />
          <path d="M1.600 6l5.200 9h10.400L12 24A12 12 0 0 1 1.600 6z" fill="#1da362" />
          <path d="M22.400 6H12l5.200 9L12 24A12 12 0 0 0 22.400 6z" fill="#ffcd46" />
          <circle cx="12" cy="12" r="5.500" fill="#fff" />
          <circle cx="12" cy="12" r="4.400" fill="#4f8df5" />
        </svg>
      </TaskButton>
      <TaskButton bar={<><span className="ml-[5px] w-8 bg-[#76b9ed]" /><span className="w-2 bg-[#5588ae]" /></>}>
        <svg width="24" height="24" viewBox="0 0 24 24">
          <path d="M17.500 0v7L3 18 0 16z" fill="#0a7cc4" />
          <path d="M17.500 24v-7L3 6 0 8z" fill="#0e8bd8" />
          <path d="M17.500 0L24 3v18l-6.500 3z" fill="#2aa5f3" />
        </svg>
      </TaskButton>
      <TaskButton bar={<><span className="ml-[5px] w-[31px] bg-[#76b9ed]" /><span className="ml-px w-2 bg-[#5588ae]" /></>}>
        <svg width="24" height="24" viewBox="0 0 24 24">
          <path d="M12 0l5.500 5.500L12 11 6.500 5.500z" fill="#f2707a" />
          <path d="M5.500 6.500L11 12l-5.500 5.500L0 12z" fill="#80b3ff" />
          <path d="M18.500 6.500L24 12l-5.500 5.500L13 12z" fill="#6cbf4c" />
          <path d="M12 13l5.500 5.500L12 24l-5.500-5.500z" fill="#ffe075" />
          <path d="M9 2.500l3.500 5v9M12.500 8.500l5 4" stroke="#2a2a2a" strokeWidth="1.600" fill="none" />
          <circle cx="12.500" cy="8" r="1.800" fill="#2a2a2a" />
          <circle cx="12.500" cy="17" r="2.200" fill="#2a2a2a" />
          <circle cx="17" cy="12.500" r="1.900" fill="#2a2a2a" />
        </svg>
      </TaskButton>
      <div className="ml-auto flex items-center">
        <svg width="88" height="16" viewBox="0 0 88 16" fill="none" stroke="#fff" strokeWidth="1.200">
          <path d="M1 10.500l5.500-5.500 5.500 5.500" />
          <path d="M29 4.500h9v8H27.500V9M38.800 7v3" />
          <path d="M31 6.500h4.500v4H31z" fill="#fff" stroke="none" />
          <path d="M24.500 1v2M27.500 1v2M23 3.500h6v2q-3 3-6 0zM26 7v3.500" />
          <path d="M50 14.500A12 12 0 0 1 61 4M53 14.500A9 9 0 0 1 61.500 7M56 14.500a6 6 0 0 1 6-5" />
          <circle cx="60.500" cy="13.500" r="1.500" fill="#fff" stroke="none" />
          <path d="M71.500 6h2.500l4-3.500v11L74 10h-2.500zM80.500 5.500q1.500 2.500 0 5M83 4q2.800 4 0 8M85.200 2q4 6 0 12" />
        </svg>
        <div className="ml-[8px] w-[54px] text-center text-[12px] leading-[18px] tracking-[-0.5px]">
          <div className="whitespace-nowrap">12:36 PM</div>
          <div className="whitespace-nowrap">4/26/2021</div>
        </div>
        <svg width="26" height="26" viewBox="0 0 26 26" className="ml-[17px] mt-[3px]">
          <path d="M0 1h16v13H9l-3 3v-3H0z" fill="#fff" />
          <path d="M3 4.500h10M3 7.500h10M3 10.500h6" stroke="#222" />
          <circle cx="15.500" cy="17" r="7.800" fill="#2b2b2b" stroke="#8a8a8a" />
          <text x="15.500" y="21" textAnchor="middle" fontSize="11" fill="#fff">3</text>
        </svg>
        <div className="ml-[10px] mr-[4px] h-10 w-px bg-[#6a6a6a]" />
      </div>
    </footer>
  );
}

export default function App() {
  return (
    <div className="flex h-[768px] w-[1366px] flex-col overflow-hidden bg-white font-['Open_Sans','Noto_Sans',sans-serif]">
      <TabStrip />
      <Toolbar />
      <Bookmarks />
      <Page />
      <Taskbar />
    </div>
  );
}
